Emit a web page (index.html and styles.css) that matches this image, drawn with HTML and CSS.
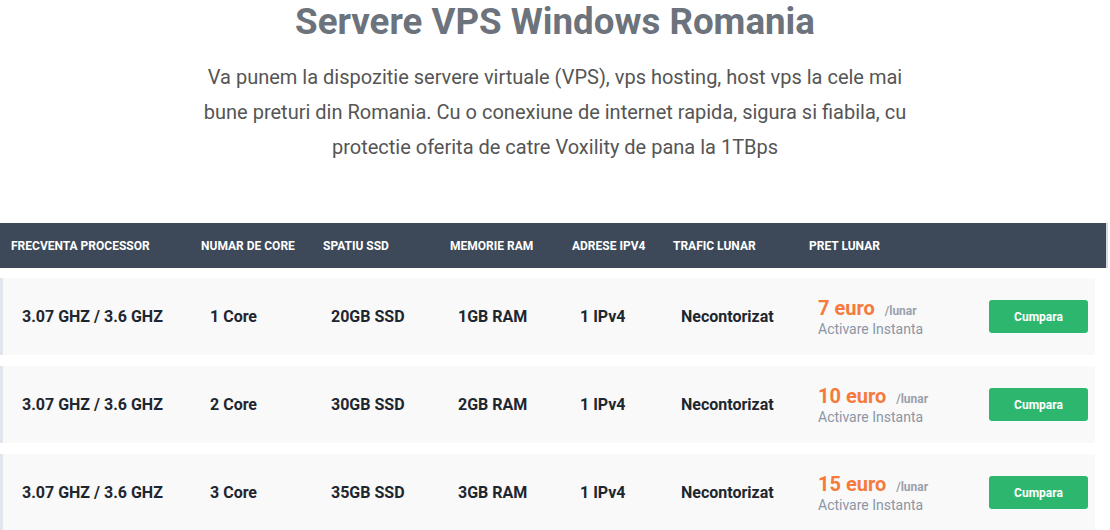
FILE: index.html
```html
<!DOCTYPE html>
<html lang="ro">
<head>
<meta charset="utf-8">
<title>Servere VPS Windows Romania</title>
<link rel="stylesheet" href="styles.css">
</head>
<body>
<section class="intro">
  <h1 class="title">Servere VPS Windows Romania</h1>
  <p class="lead">Va punem la dispozitie servere virtuale (VPS), vps hosting, host vps la cele mai bune preturi din Romania. Cu o conexiune de internet rapida, sigura si fiabila, cu protectie oferita de catre Voxility de pana la 1TBps</p>
</section>
<section class="plans">
  <div class="thead">
    <div>Frecventa processor</div>
    <div>Numar de core</div>
    <div>Spatiu SSD</div>
    <div>Memorie RAM</div>
    <div>Adrese IPV4</div>
    <div>Trafic lunar</div>
    <div>Pret lunar</div>
    <div></div>
  </div>
  <div class="row">
    <div>3.07 GHZ / 3.6 GHZ</div>
    <div>1 Core</div>
    <div>20GB SSD</div>
    <div>1GB RAM</div>
    <div>1 IPv4</div>
    <div>Necontorizat</div>
    <div class="price"><div><span class="amount">7 euro</span><span class="per">/lunar</span></div><div class="note">Activare Instanta</div></div>
    <div><a class="buy" href="#">Cumpara</a></div>
  </div>
  <div class="row">
    <div>3.07 GHZ / 3.6 GHZ</div>
    <div>2 Core</div>
    <div>30GB SSD</div>
    <div>2GB RAM</div>
    <div>1 IPv4</div>
    <div>Necontorizat</div>
    <div class="price"><div><span class="amount">10 euro</span><span class="per">/lunar</span></div><div class="note">Activare Instanta</div></div>
    <div><a class="buy" href="#">Cumpara</a></div>
  </div>
  <div class="row">
    <div>3.07 GHZ / 3.6 GHZ</div>
    <div>3 Core</div>
    <div>35GB SSD</div>
    <div>3GB RAM</div>
    <div>1 IPv4</div>
    <div>Necontorizat</div>
    <div class="price"><div><span class="amount">15 euro</span><span class="per">/lunar</span></div><div class="note">Activare Instanta</div></div>
    <div><a class="buy" href="#">Cumpara</a></div>
  </div>
</section>
</body>
</html>
```
FILE: styles.css
```css
* { box-sizing: border-box; }
html, body { margin: 0; padding: 0; background: #fff; }
body { font-family: Roboto, "Liberation Sans", Arial, sans-serif; overflow: hidden; }

.intro { text-align: center; }
.title {
  margin: 0;
  font-size: 36.7px;
  line-height: 43px;
  font-weight: 700;
  color: #6c737c;
}
.lead {
  margin: 17px auto 0;
  width: 720px;
  font-size: 20px;
  line-height: 35px;
  color: #555;
}

.plans { margin-top: 58px; }
.thead {
  display: grid;
  grid-template-columns: 190px 122px 127px 122px 101px 136px 180px 1fr;
  align-items: center;
  width: 1108px;
  height: 45px;
  padding-left: 11px;
  background: #3d4959;
  border-right: 2px solid #d8dadd;
  color: #fff;
  font-size: 12px;
  font-weight: 700;
  text-transform: uppercase;
}
.row {
  display: grid;
  grid-template-columns: 188px 121px 127px 122px 101px 137px 171px 99px;
  align-items: center;
  width: 1095px;
  height: 77px;
  margin-top: 10px;
  padding-left: 19px;
  background: #f9f9f9;
  border-left: 3px solid #e1e5ee;
  color: #1e2630;
  font-size: 16px;
  font-weight: 700;
}
.row + .row { margin-top: 11px; }

.price { line-height: 1; }
.amount { font-size: 20px; color: #f47b3d; font-weight: 700; }
.per { margin-left: 10px; font-size: 12px; color: #9aa1ab; font-weight: 700; }
.note { margin-top: 4px; font-size: 14px; font-weight: 400; color: #8c95a6; }

.buy {
  display: flex;
  align-items: center;
  justify-content: center;
  width: 99px;
  height: 33px;
  border-radius: 3px;
  background: #2db66e;
  color: #fff;
  font-size: 12px;
  font-weight: 700;
  text-decoration: none;
}
```
